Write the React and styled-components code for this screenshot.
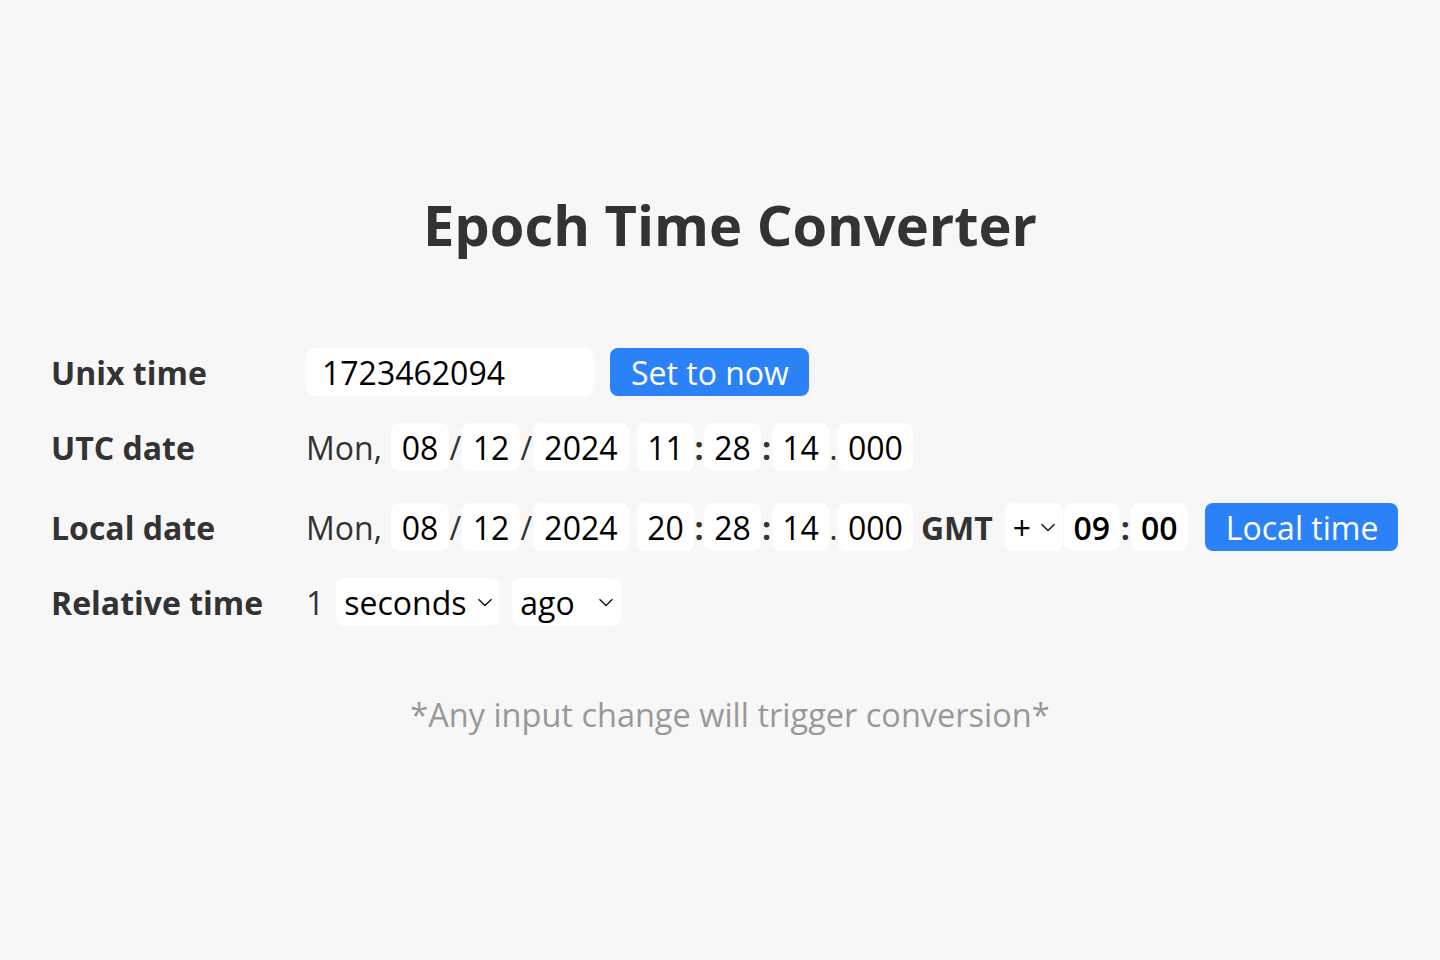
import { useState } from "react";
import styled, { createGlobalStyle } from "styled-components";

const GlobalStyle = createGlobalStyle`
  body {
    margin: 0;
    background: #f7f7f7;
    font-family: "Open Sans", "Noto Sans", sans-serif;
  }
`;

const Page = styled.div`
  min-height: 960px;
  padding: 186px 31px 0 51px;
  box-sizing: border-box;
  color: #333;
`;

const Title = styled.h1`
  margin: 0;
  text-align: center;
  font-size: 56px;
  font-weight: 700;
  line-height: normal;
  color: #333;
`;

const Form = styled.div`
  margin-top: 86px;
  display: flex;
  flex-direction: column;
  gap: 27px;
`;

const Row = styled.div`
  display: grid;
  grid-template-columns: 255px 1fr;
  align-items: center;
  height: 48px;
  margin-top: ${(p) => p.$offset || 0}px;
`;

const Label = styled.div`
  font-size: 32px;
  font-weight: 700;
  color: #333;
`;

const Field = styled.div`
  display: flex;
  align-items: center;
  font-size: 32px;
  color: #333;
`;

const Box = styled.input`
  box-sizing: border-box;
  height: 48px;
  width: ${(p) => p.$w}px;
  border: none;
  border-radius: 8px;
  background: #fff;
  font-family: inherit;
  font-size: 32px;
  font-weight: ${(p) => (p.$bold ? 600 : 400)};
  color: #000;
  text-align: ${(p) => (p.$left ? "left" : "center")};
  padding: ${(p) => (p.$left ? "0 16px" : "0")};
  outline: none;
`;

const Sep = styled.span`
  width: ${(p) => p.$w}px;
  text-align: center;
  color: #333;
  font-weight: ${(p) => (p.$bold ? 700 : 400)};
`;

const Gap = styled.span`
  width: ${(p) => p.$w}px;
  flex: none;
`;

const Text = styled.span`
  font-weight: ${(p) => (p.$bold ? 700 : 400)};
  color: #333;
`;

const Button = styled.button`
  height: 48px;
  border: none;
  border-radius: 8px;
  background: #2b82f8;
  color: #fff;
  font-family: inherit;
  font-size: 32px;
  padding: 0 20px 0 21px;
  cursor: pointer;
  margin-left: ${(p) => p.$ml || 0}px;
`;

const SelectWrap = styled.div`
  position: relative;
  height: 48px;
  width: ${(p) => p.$w}px;
  flex: none;
`;

const Select = styled.select`
  appearance: none;
  box-sizing: border-box;
  width: 100%;
  height: 100%;
  border: none;
  border-radius: 8px;
  background: #fff;
  font-family: inherit;
  font-size: 32px;
  color: #000;
  padding: 0 0 0 8px;
  outline: none;
`;

const Chevron = styled.svg`
  position: absolute;
  right: ${(p) => p.$r}px;
  top: 20px;
  pointer-events: none;
`;

const Footer = styled.p`
  margin: 66px 0 0;
  text-align: center;
  font-size: 32.5px;
  color: #999;
`;

const Drop = ({ w, r = 7, value, options }) => (
  <SelectWrap $w={w}>
    <Select defaultValue={value}>
      {options.map((o) => (
        <option key={o}>{o}</option>
      ))}
    </Select>
    <Chevron $r={r} width="16" height="9" viewBox="0 0 16 9">
      <path d="M1.5 1.2 L8 7.6 L14.5 1.2" fill="none" stroke="#111" strokeWidth="1.4" />
    </Chevron>
  </SelectWrap>
);

const DateParts = ({ h }) => (
  <>
    <Text>Mon,</Text>
    <Gap $w={9} />
    <Box $w={58} defaultValue="08" />
    <Sep $w={13}>/</Sep>
    <Box $w={58} defaultValue="12" />
    <Sep $w={13}>/</Sep>
    <Box $w={96} defaultValue="2024" />
    <Gap $w={8} />
    <Box $w={57} defaultValue={h} />
    <Sep $w={10} $bold>:</Sep>
    <Box $w={57} defaultValue="28" />
    <Sep $w={11} $bold>:</Sep>
    <Box $w={57} defaultValue="14" />
    <Sep $w={9}>.</Sep>
    <Box $w={75} defaultValue="000" />
  </>
);

const App = () => {
  const [unix, setUnix] = useState("1723462094");

  return (
    <Page>
      <GlobalStyle />
      <Title>Epoch Time Converter</Title>
      <Form>
        <Row>
          <Label>Unix time</Label>
          <Field>
            <Box $w={288} $left value={unix} onChange={(e) => setUnix(e.target.value)} />
            <Button $ml={16} onClick={() => setUnix(String(Math.floor(Date.now() / 1000)))}>
              Set to now
            </Button>
          </Field>
        </Row>
        <Row>
          <Label>UTC date</Label>
          <Field>
            <DateParts h="11" />
          </Field>
        </Row>
        <Row $offset={5}>
          <Label>Local date</Label>
          <Field>
            <DateParts h="20" />
            <Gap $w={8} />
            <Text $bold>GMT</Text>
            <Gap $w={12} />
            <Drop w={58} value="+" options={["+", "-"]} />
            <Gap $w={1} />
            <Box $w={56} $bold defaultValue="09" />
            <Sep $w={11} $bold>:</Sep>
            <Box $w={57} $bold defaultValue="00" />
            <Button $ml={17}>Local time</Button>
          </Field>
        </Row>
        <Row>
          <Label>Relative time</Label>
          <Field>
            <Text>1</Text>
            <Gap $w={12} />
            <Drop w={163} r={6} value="seconds" options={["seconds", "minutes", "hours", "days"]} />
            <Gap $w={13} />
            <Drop w={109} value="ago" options={["ago", "later"]} />
          </Field>
        </Row>
      </Form>
      <Footer>*Any input change will trigger conversion*</Footer>
    </Page>
  );
};

export default App;
